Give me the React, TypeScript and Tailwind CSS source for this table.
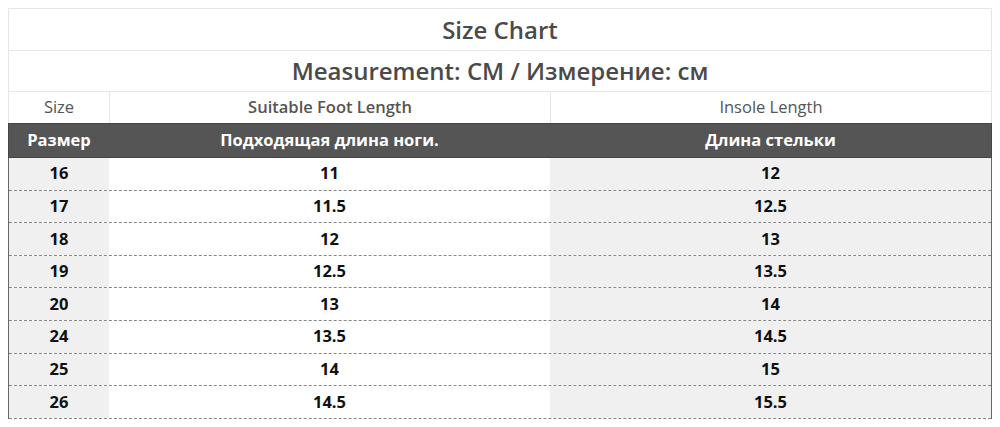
const rows: [string, string, string][] = [
  ["16", "11", "12"],
  ["17", "11.5", "12.5"],
  ["18", "12", "13"],
  ["19", "12.5", "13.5"],
  ["20", "13", "14"],
  ["24", "13.5", "14.5"],
  ["25", "14", "15"],
  ["26", "14.5", "15.5"],
];

export default function App() {
  return (
    <div className="w-[1000px] h-[427px] bg-white pt-[8px] px-[8px] font-['Open_Sans',sans-serif]">
      <div className="w-[984px] border-t border-l border-r border-[#e6e6e6]">
        {/* Заголовок */}
        <div className="h-[42px] flex items-center justify-center border-b border-[#e6e6e6] text-[24px] font-semibold text-[#4a4a4a]">
          Size Chart
        </div>
        <div className="h-[41px] flex items-center justify-center border-b border-[#e6e6e6] text-[24px] font-semibold text-[#4a4a4a]">
          Measurement: CM / Измерение: см
        </div>
        <div className="h-[31px] flex text-[16.5px] text-[#555]">
          <div className="w-[101px] flex items-center justify-center border-r border-[#e6e6e6]">Size</div>
          <div className="w-[441px] flex items-center justify-center border-r border-[#e6e6e6] font-semibold">Suitable Foot Length</div>
          <div className="flex-1 flex items-center justify-center">Insole Length</div>
        </div>
      </div>

      {/* Тёмная шапка */}
      <div className="w-[984px] h-[35px] flex bg-[#555] border border-[#444] text-white text-[16.5px] font-bold">
        <div className="w-[100px] flex items-center justify-center">Размер</div>
        <div className="w-[441px] flex items-center justify-center">Подходящая длина ноги.</div>
        <div className="flex-1 flex items-center justify-center">Длина стельки</div>
      </div>

      {/* Данные */}
      <div className="w-[984px] border-l border-r border-[#666]">
        {rows.map(([a, b, c]) => (
          <div key={a} className="h-[32.6px] flex border-b border-dashed border-[#888] text-[16.5px] font-bold text-[#111]">
            <div className="w-[100px] bg-[#f0f0f0] flex items-center justify-center">{a}</div>
            <div className="w-[441px] bg-white flex items-center justify-center">{b}</div>
            <div className="flex-1 bg-[#f0f0f0] flex items-center justify-center">{c}</div>
          </div>
        ))}
      </div>
    </div>
  );
}
